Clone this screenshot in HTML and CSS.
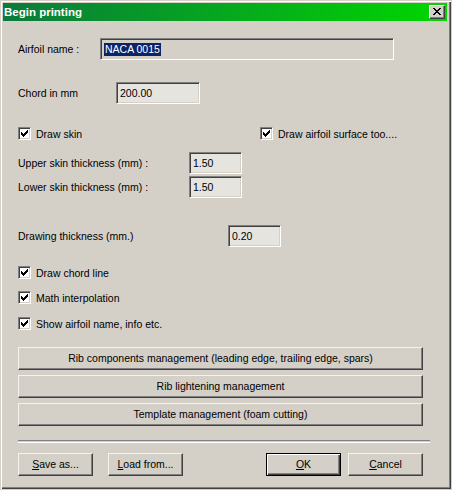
FILE: index.html
```
<!DOCTYPE html>
<html>
<head>
<meta charset="utf-8">
<link rel="stylesheet" href="styles.css">
</head>
<body>
<div class="window">
  <div class="titlebar">
    <span class="title">Begin printing</span>
    <span class="closebtn"><svg width="8" height="7" viewBox="0 0 8 7" shape-rendering="crispEdges"><path d="M0 0h2v1h-2z M6 0h2v1h-2z M1 1h2v1h-2z M5 1h2v1h-2z M2 2h4v1h-4z M3 3h2v1h-2z M2 4h4v1h-4z M1 5h2v1h-2z M5 5h2v1h-2z M0 6h2v1h-2z M6 6h2v1h-2z" fill="#000"/></svg></span>
  </div>
  <div class="content">
    <div class="row r-airfoil">
      <span class="lbl w-airfoil">Airfoil name :</span>
      <div class="field f-name"><span class="sel">NACA 0015</span></div>
    </div>
    <div class="row r-chord">
      <span class="lbl w-chord">Chord in mm</span>
      <div class="field dotted f-chord">200.00</div>
    </div>
    <div class="row r-checks">
      <label class="check w-skin"><span class="box"><svg width="7" height="7" viewBox="0 0 7 7" shape-rendering="crispEdges"><path d="M6 0h1v1h-1z M5 1h2v1h-2z M0 2h1v1h-1z M4 2h3v1h-3z M0 3h2v1h-2z M3 3h3v1h-3z M0 4h5v1h-5z M1 5h3v1h-3z M2 6h1v1h-1z" fill="#000"/></svg></span><span>Draw skin</span></label>
      <label class="check"><span class="box"><svg width="7" height="7" viewBox="0 0 7 7" shape-rendering="crispEdges"><path d="M6 0h1v1h-1z M5 1h2v1h-2z M0 2h1v1h-1z M4 2h3v1h-3z M0 3h2v1h-2z M3 3h3v1h-3z M0 4h5v1h-5z M1 5h3v1h-3z M2 6h1v1h-1z" fill="#000"/></svg></span><span>Draw airfoil surface too....</span></label>
    </div>
    <div class="row r-upper">
      <span class="lbl w-skinlbl">Upper skin thickness (mm) :</span>
      <div class="field dotted f-small">1.50</div>
    </div>
    <div class="row r-lower">
      <span class="lbl w-skinlbl">Lower skin thickness (mm) :</span>
      <div class="field dotted f-small">1.50</div>
    </div>
    <div class="row r-draw">
      <span class="lbl w-draw">Drawing thickness (mm.)</span>
      <div class="field dotted f-small">0.20</div>
    </div>
    <div class="row r-c1">
      <label class="check"><span class="box"><svg width="7" height="7" viewBox="0 0 7 7" shape-rendering="crispEdges"><path d="M6 0h1v1h-1z M5 1h2v1h-2z M0 2h1v1h-1z M4 2h3v1h-3z M0 3h2v1h-2z M3 3h3v1h-3z M0 4h5v1h-5z M1 5h3v1h-3z M2 6h1v1h-1z" fill="#000"/></svg></span><span>Draw chord line</span></label>
    </div>
    <div class="row r-c2">
      <label class="check"><span class="box"><svg width="7" height="7" viewBox="0 0 7 7" shape-rendering="crispEdges"><path d="M6 0h1v1h-1z M5 1h2v1h-2z M0 2h1v1h-1z M4 2h3v1h-3z M0 3h2v1h-2z M3 3h3v1h-3z M0 4h5v1h-5z M1 5h3v1h-3z M2 6h1v1h-1z" fill="#000"/></svg></span><span>Math interpolation</span></label>
    </div>
    <div class="row r-c3">
      <label class="check"><span class="box"><svg width="7" height="7" viewBox="0 0 7 7" shape-rendering="crispEdges"><path d="M6 0h1v1h-1z M5 1h2v1h-2z M0 2h1v1h-1z M4 2h3v1h-3z M0 3h2v1h-2z M3 3h3v1h-3z M0 4h5v1h-5z M1 5h3v1h-3z M2 6h1v1h-1z" fill="#000"/></svg></span><span>Show airfoil name, info etc.</span></label>
    </div>
    <div class="btn wide b1">Rib components management (leading edge, trailing edge, spars)</div>
    <div class="btn wide b2">Rib lightening management</div>
    <div class="btn wide b3">Template management (foam cutting)</div>
    <div class="sep"></div>
    <div class="bottom">
      <div class="btn small"><u>S</u>ave as...</div>
      <div class="btn small m-load"><u>L</u>oad from...</div>
      <div class="btn small default m-ok"><u>O</u>K</div>
      <div class="btn small m-cancel"><u>C</u>ancel</div>
    </div>
  </div>
</div>
</body>
</html>
```
FILE: styles.css
```
html, body {
  margin: 0;
  padding: 0;
  background: #d4d0c8;
}
body {
  width: 452px;
  height: 490px;
  overflow: hidden;
  font-family: "Liberation Sans", Arial, sans-serif;
  font-size: 10.5px;
  color: #000;
}
.window {
  box-sizing: border-box;
  width: 452px;
  height: 490px;
  background: #d4d0c8;
  border: 1px solid #d4d0c8;
  box-shadow: inset 1px 1px 0 #ffffff, inset -1px -1px 0 #404040, inset -2px -2px 0 #808080;
  padding: 2px 4px 2px 2px;
}
.titlebar {
  height: 18px;
  background: linear-gradient(to right, #0b7a3c, #00d600);
  display: flex;
  align-items: center;
  justify-content: space-between;
  padding: 0 2px 0 1px;
}
.title {
  color: #fff;
  font-weight: bold;
  font-size: 11.5px;
}
.closebtn {
  box-sizing: border-box;
  width: 16px;
  height: 14px;
  background: #d4d0c8;
  border-top: 1px solid #fff;
  border-left: 1px solid #fff;
  border-right: 1px solid #404040;
  border-bottom: 1px solid #404040;
  box-shadow: inset -1px -1px 0 #808080;
  display: flex;
  align-items: center;
  justify-content: center;
  padding: 0 1px 1px 0;
}
.closebtn svg { display: block; }
.content {
  padding-left: 15px;
}
.row {
  display: flex;
  align-items: center;
}
.lbl { display: block; flex: none; }
.w-airfoil { width: 82px; }
.w-chord { width: 98px; }
.w-skinlbl { width: 171px; }
.w-draw { width: 210px; }
.w-skin { width: 242px; }

.field {
  box-sizing: border-box;
  height: 22px;
  border-top: 1px solid #808080;
  border-left: 1px solid #808080;
  border-right: 1px solid #fff;
  border-bottom: 1px solid #fff;
  box-shadow: inset 1px 1px 0 #404040, inset -1px -1px 0 #d4d0c8;
  padding: 0 0 0 3px;
  display: flex;
  align-items: center;
  line-height: 13px;
}
.dotted {
  background-color: #e6e4df;
}
.f-name { width: 294px; }
.f-chord { width: 84px; }
.f-small { width: 53px; }
.sel {
  background: #0a246a;
  color: #fff;
  padding: 0 1px 0 1px;
  line-height: 13px;
}

.r-airfoil { margin-top: 17px; height: 22px; }
.r-chord { margin-top: 22px; height: 22px; }
.r-checks { margin-top: 23px; height: 13px; }
.r-upper { margin-top: 12px; height: 22px; }
.r-lower { margin-top: 2px; height: 22px; }
.r-draw { margin-top: 27px; height: 22px; }
.r-c1 { margin-top: 19px; height: 13px; }
.r-c2 { margin-top: 12px; height: 13px; }
.r-c3 { margin-top: 13px; height: 13px; }

.check {
  display: flex;
  align-items: center;
  gap: 5px;
}
.box {
  box-sizing: border-box;
  width: 13px;
  height: 13px;
  background: #fff;
  border-top: 1px solid #808080;
  border-left: 1px solid #808080;
  border-right: 1px solid #fff;
  border-bottom: 1px solid #fff;
  box-shadow: inset 1px 1px 0 #404040, inset -1px -1px 0 #d4d0c8;
  display: flex;
  padding: 2px 0 0 2px;
  flex: none;
}
.box svg { display: block; }

.btn {
  box-sizing: border-box;
  height: 23px;
  background: #d4d0c8;
  border-top: 1px solid #f4f3f0;
  border-left: 1px solid #f4f3f0;
  border-right: 1px solid #404040;
  border-bottom: 1px solid #404040;
  box-shadow: inset -1px -1px 0 #808080;
  display: flex;
  align-items: center;
  justify-content: center;
  padding-bottom: 1px;
}
.wide { width: 405px; }
.b1 { margin-top: 17px; }
.b2 { margin-top: 5px; }
.b3 { margin-top: 5px; }
.sep {
  width: 412px;
  height: 1px;
  border-top: 1px solid #808080;
  border-bottom: 1px solid #fff;
  margin-top: 14px;
}
.bottom {
  display: flex;
  margin-top: 10px;
}
.small { width: 75px; }
.m-load { margin-left: 15px; }
.m-ok { margin-left: 83px; }
.m-cancel { margin-left: 7px; }
.default {
  border: 1px solid #000;
  box-shadow: inset 1px 1px 0 #fff, inset -1px -1px 0 #404040, inset -2px -2px 0 #808080;
}
u { text-decoration: underline; text-underline-offset: 1px; }
```
